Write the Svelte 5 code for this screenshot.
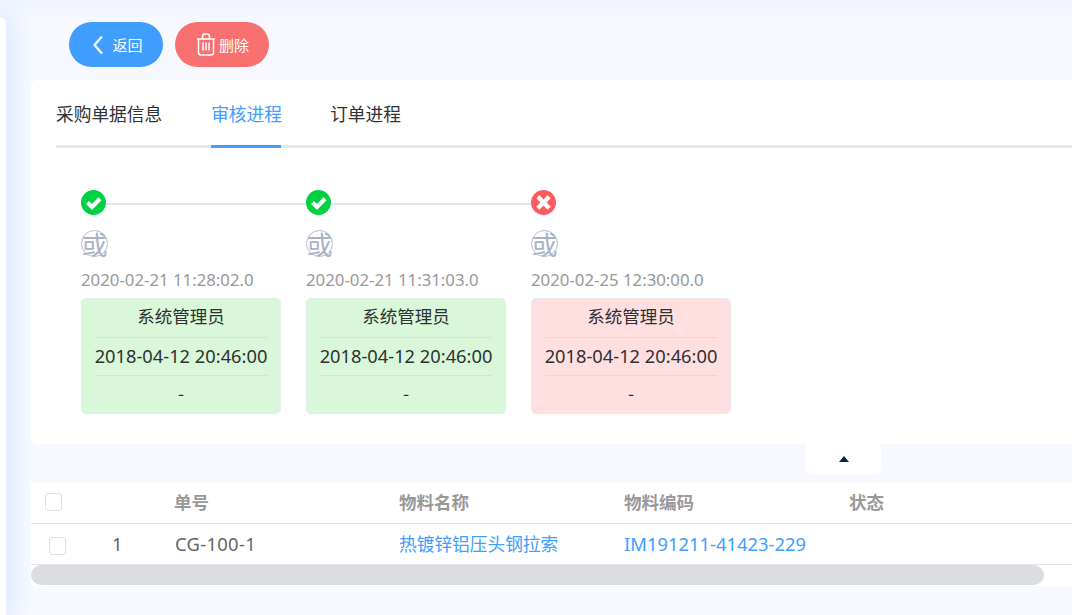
<script>
  const tabs = ["采购单据信息", "审核进程", "订单进程"];
  const active = 1;

  const steps = [
    { status: "ok", time: "2020-02-21 11:28:02.0" },
    { status: "ok", time: "2020-02-21 11:31:03.0" },
    { status: "fail", time: "2020-02-25 12:30:00.0" },
  ];
</script>

<div class="page">
  <aside class="sidebar"></aside>
  <main class="main">
    <div class="actions">
      <button class="btn back">
        <svg width="12" height="20" viewBox="0 0 12 20"><path d="M10 1.500 2.500 10 10 18.500" fill="none" stroke="#fff" stroke-width="2.200" /></svg>
        <span>返回</span>
      </button>
      <button class="btn del">
        <svg width="20" height="23" viewBox="0 0 20 23" fill="none" stroke="#fff" stroke-width="1.500">
          <path d="M1 6h18M6.500 6V3.500Q6.500 1 9 1h2q2.500 0 2.500 2.500V6" />
          <path d="M2.500 6v13.500q0 2.500 2.500 2.500h10q2.500 0 2.500-2.500V6" />
          <path d="M7 9.500v8M10 9.500v8M13 9.500v8" />
        </svg>
        <span>删除</span>
      </button>
    </div>

    <section class="panel">
      <div class="tabs">
        {#each tabs as tab, i}
          <div class="tab" class:active={i === active}>{tab}</div>
        {/each}
      </div>

      <div class="steps">
        {#each steps as step, i}
          <div class="step">
            <div class="head">
              {#if step.status === "ok"}
                <svg class="icon" width="25" height="25" viewBox="0 0 25 25">
                  <circle cx="12.500" cy="12.500" r="12.500" fill="#00d142" />
                  <path d="M6.500 12.500 11 17 19 8.800" fill="none" stroke="#fff" stroke-width="4.200" />
                </svg>
              {:else}
                <svg class="icon" width="25" height="25" viewBox="0 0 25 25">
                  <circle cx="12.500" cy="12.500" r="12.500" fill="#ff5a60" />
                  <path d="M6.800 6.800 18.200 18.200M18.200 6.800 6.800 18.200" fill="none" stroke="#fff" stroke-width="4.400" />
                </svg>
              {/if}
              {#if i < steps.length - 1}
                <div class="line"></div>
              {/if}
            </div>
            <div class="or">或</div>
            <div class="time">{step.time}</div>
            <div class="card" class:fail={step.status === "fail"}>
              <div class="row">系统管理员</div>
              <div class="row latin">2018-04-12 20:46:00</div>
              <div class="row">-</div>
            </div>
          </div>
        {/each}
      </div>
    </section>

    <div class="toggle"><span class="arrow"></span></div>

    <section class="table">
      <div class="tr th">
        <div class="cell check"><span class="box"></span></div>
        <div class="cell">单号</div>
        <div class="cell">物料名称</div>
        <div class="cell">物料编码</div>
        <div class="cell">状态</div>
      </div>
      <div class="tr td">
        <div class="cell check"><span class="box inner"></span><span class="index latin">1</span></div>
        <div class="cell latin code">CG-100-1</div>
        <div class="cell link">热镀锌铝压头钢拉索</div>
        <div class="cell link latin">IM191211-41423-229</div>
        <div class="cell"></div>
      </div>
      <div class="track"><div class="thumb"></div></div>
    </section>
  </main>
</div>

<style>
  :global(body) {
    margin: 0;
    background: #f8f9ff;
  }
  .page {
    display: flex;
    width: 1072px;
    height: 615px;
    overflow: hidden;
    background: linear-gradient(#f0f4ff, #f8f9ff 24px);
    font-family: "Noto Sans CJK SC", "Noto Sans", sans-serif;
    color: #303133;
  }
  .sidebar {
    flex: none;
    width: 6px;
    margin-top: 17px;
    background: #fff;
    border-radius: 0 10px 0 0;
    box-shadow: 0 0 24px 5px #cfe1ff;
  }
  .main {
    flex: 1;
    min-width: 0;
    padding-left: 25px;
  }
  .actions {
    display: flex;
    gap: 12px;
    padding: 22px 0 13px 38px;
  }
  .btn {
    display: flex;
    align-items: center;
    justify-content: center;
    width: 94px;
    height: 45px;
    padding: 0;
    border: 0;
    border-radius: 23px;
    color: #fff;
    font: inherit;
    font-size: 15px;
  }
  .back {
    gap: 8px;
    padding-left: 3px;
    background: #409eff;
  }
  .del {
    gap: 3px;
    padding-left: 1px;
    background: #f97070;
  }
  .panel {
    height: 364px;
    box-sizing: border-box;
    padding: 0 0 0 25px;
    background: #fff;
    border-radius: 6px 0 0 6px;
  }
  .tabs {
    display: flex;
    gap: 49px;
    height: 68px;
    box-sizing: border-box;
    border-bottom: 3px solid #e4e7ed;
  }
  .tab {
    height: 68px;
    box-sizing: border-box;
    padding-top: 19px;
    font-size: 17.700px;
    line-height: 28px;
  }
  .tab.active {
    width: 70px;
    white-space: nowrap;
    color: #409eff;
    border-bottom: 3px solid #409eff;
  }
  .steps {
    display: flex;
    padding: 42px 0 0 25px;
  }
  .step {
    width: 225px;
  }
  .head {
    display: flex;
    align-items: center;
    height: 25px;
  }
  .icon {
    flex: none;
  }
  .line {
    flex: 1;
    height: 2px;
    margin-top: 2px;
    background: #e1e5ec;
  }
  .or {
    display: flex;
    align-items: center;
    justify-content: center;
    width: 25px;
    height: 25px;
    margin-top: 15px;
    border: 1px solid #b4bccf;
    border-radius: 50%;
    color: #aab2c8;
    font-size: 26px;
    line-height: 25px;
  }
  .time {
    margin-top: 11px;
    height: 24px;
    color: #999;
    font-family: "Noto Sans", sans-serif;
    font-size: 16.800px;
    line-height: 24px;
    white-space: nowrap;
  }
  .card {
    width: 200px;
    height: 116px;
    margin-top: 6px;
    box-sizing: border-box;
    padding: 0 13px;
    background: #d9f8da;
    border: 1px solid #e6ebf0;
    border-radius: 5px;
    font-size: 17.500px;
  }
  .card.fail {
    background: #ffdfe0;
  }
  .row {
    display: flex;
    justify-content: center;
    height: 38px;
    line-height: 36px;
    white-space: nowrap;
    border-bottom: 1px solid #cfe3e6;
    box-sizing: border-box;
  }
  .row:first-child {
    height: 39px;
    line-height: 34px;
  }
  .row.latin {
    font-size: 18.300px;
  }
  .row:last-child {
    line-height: 34px;
    border-bottom: 0;
  }
  .toggle {
    display: flex;
    align-items: center;
    justify-content: center;
    width: 75px;
    height: 30px;
    margin: 0 0 8px 775px;
    background: #fff;
    border-radius: 0 0 5px 5px;
  }
  .arrow {
    width: 0;
    height: 0;
    margin-left: 1px;
    border: 5px solid transparent;
    border-top: 0;
    border-bottom: 6px solid #0c2050;
  }
  .table {
    background: #fff;
  }
  .tr {
    display: grid;
    grid-template-columns: 143px 225px 225px 225px 225px;
    height: 42px;
    box-sizing: border-box;
    align-items: center;
    border-bottom: 1px solid #e4e5ea;
  }
  .th {
    color: #999;
    font-size: 17.500px;
    font-weight: 700;
    padding-bottom: 2px;
  }
  .td {
    color: #666;
    font-size: 17.700px;
    height: 41px;
    padding-bottom: 2px;
  }
  .latin {
    font-family: "Noto Sans", sans-serif;
    font-size: 18.400px;
  }
  .code {
    padding-left: 1px;
    letter-spacing: 0.300px;
  }
  .check {
    display: flex;
    align-items: center;
    padding-left: 14px;
  }
  .box {
    width: 15px;
    height: 16px;
    margin-top: 1px;
    background: #fff;
    border: 1px solid #dcdfe6;
    border-radius: 3px;
  }
  .box.inner {
    margin-top: 5px;
    margin-left: 4px;
  }
  .index {
    margin-left: 46px;
  }
  .link {
    color: #409eff;
  }
  .track {
    height: 21px;
    background: #fff;
  }
  .thumb {
    width: 1013px;
    height: 20px;
    background: #dcddde;
    border-radius: 10px;
  }
</style>
